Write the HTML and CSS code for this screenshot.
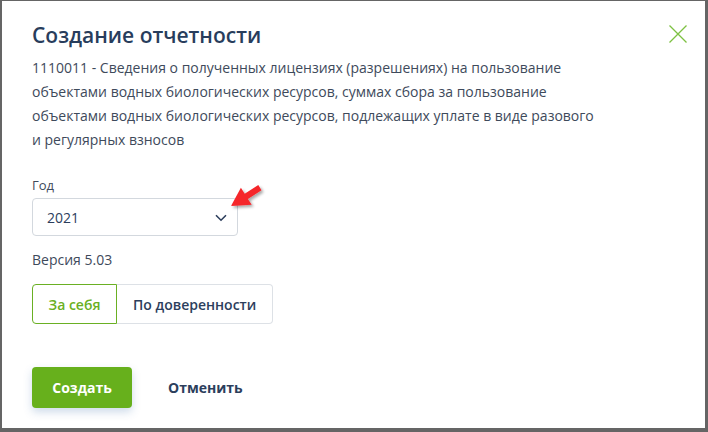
FILE: index.html
```html
<!DOCTYPE html>
<html lang="ru">
<head>
<meta charset="utf-8">
<link rel="stylesheet" href="styles.css">
</head>
<body>
<div class="frame">
  <div class="modal">
    <div class="head">
      <h1 class="title">Создание отчетности</h1>
      <button class="close" aria-label="Закрыть">
        <svg width="20" height="20" viewBox="0 0 20 20"><path d="M1.5 1.5 L18.5 18.5 M18.5 1.5 L1.5 18.5" stroke="#7dc142" stroke-width="1.3" fill="none"/></svg>
      </button>
    </div>
    <p class="desc">1110011 - Сведения о полученных лицензиях (разрешениях) на пользование объектами водных биологических ресурсов, суммах сбора за пользование объектами водных биологических ресурсов, подлежащих уплате в виде разового и регулярных взносов</p>
    <div class="field">
      <div class="label">Год</div>
      <div class="select">
        <span class="value">2021</span>
        <svg class="chev" width="12" height="8" viewBox="0 0 12 8"><path d="M1 1.2 L6 6.2 L11 1.2" stroke="#2c3e5c" stroke-width="1.6" fill="none"/></svg>
      </div>
    </div>
    <div class="version">Версия 5.03</div>
    <div class="toggle">
      <button class="seg active">За себя</button>
      <button class="seg">По доверенности</button>
    </div>
    <div class="actions">
      <button class="primary">Создать</button>
      <button class="link">Отменить</button>
    </div>
  </div>
  <svg class="pointer" width="708" height="432" viewBox="0 0 708 432">
    <defs>
      <filter id="sh" x="-50%" y="-50%" width="200%" height="200%">
        <feGaussianBlur in="SourceAlpha" stdDeviation="1.5"/>
        <feOffset dx="1.5" dy="1.5"/>
        <feComponentTransfer><feFuncA type="linear" slope="0.35"/></feComponentTransfer>
        <feMerge><feMergeNode/><feMergeNode in="SourceGraphic"/></feMerge>
      </filter>
    </defs>
    <g filter="url(#sh)">
      <polygon points="231,206 240.9,187.8 244.7,193.8 258.3,185.1 261.5,190.2 247.9,198.9 251.7,204.8" fill="#f5262b"/>
    </g>
  </svg>
</div>
</body>
</html>
```

FILE: styles.css
```css
html, body {
  margin: 0;
  padding: 0;
}
body {
  width: 708px;
  height: 432px;
  font-family: "Open Sans", "Noto Sans", sans-serif;
  background: #ffffff;
}
.frame {
  position: relative;
  box-sizing: border-box;
  width: 708px;
  height: 432px;
  border-style: solid;
  border-color: #656565;
  border-width: 1px 3px 4px 2px;
  background: #ffffff;
}
.modal {
  padding: 19px 17px 0 30px;
  display: flex;
  flex-direction: column;
}
.head {
  display: flex;
  justify-content: space-between;
  align-items: flex-start;
}
.title {
  margin: 0;
  font-size: 21px;
  line-height: 30px;
  font-weight: 600;
  color: #283d5c;
}
.close {
  margin-top: 4px;
  padding: 0;
  border: 0;
  background: none;
  width: 20px;
  height: 20px;
  display: flex;
}
.desc {
  margin: 6px 0 0;
  max-width: 566px;
  font-size: 14px;
  line-height: 24px;
  color: #3e4a5b;
}
.field {
  margin-top: 24px;
  display: flex;
  flex-direction: column;
  gap: 4px;
}
.label {
  font-size: 13px;
  line-height: 18px;
  color: #3e4a5b;
}
.select {
  box-sizing: border-box;
  width: 206px;
  height: 38px;
  border: 1px solid #d3d8de;
  border-radius: 4px;
  display: flex;
  align-items: center;
  justify-content: space-between;
  padding: 0 10px 0 14px;
}
.value {
  font-size: 14px;
  color: #2c3e5c;
}
.chev {
  display: block;
  margin-top: 2px;
}
.version {
  margin-top: 14px;
  font-size: 14px;
  line-height: 20px;
  color: #3e4a5b;
}
.toggle {
  margin-top: 14px;
  display: flex;
}
.seg {
  box-sizing: border-box;
  height: 40px;
  font-family: inherit;
  font-size: 14px;
  font-weight: 600;
  color: #2c3e5c;
  background: #ffffff;
  border: 1px solid #dde1e6;
  border-left: 0;
  border-radius: 0 4px 4px 0;
  padding: 0 16px;
}
.seg.active {
  color: #6ab023;
  border: 1px solid #6ab023;
  border-radius: 4px 0 0 4px;
  width: 85px;
  padding: 0;
}
.actions {
  margin-top: 43px;
  display: flex;
  align-items: center;
  gap: 36px;
}
.primary {
  box-sizing: border-box;
  width: 100px;
  height: 41px;
  border: 0;
  border-radius: 4px;
  background: #67b01c;
  color: #ffffff;
  font-family: inherit;
  font-size: 14px;
  font-weight: 700;
  box-shadow: 0 4px 8px rgba(60, 110, 170, 0.25);
}
.link {
  border: 0;
  background: none;
  padding: 0;
  font-family: inherit;
  font-size: 14px;
  font-weight: 700;
  color: #2c3e5c;
}
.pointer {
  position: absolute;
  left: -2px;
  top: -1px;
  pointer-events: none;
}
```
